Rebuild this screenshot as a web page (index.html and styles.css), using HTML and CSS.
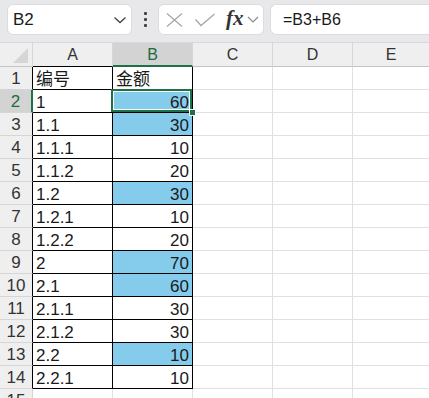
FILE: index.html
```html
<!DOCTYPE html>
<html lang="zh">
<head>
  <meta charset="UTF-8">
  <title>Sheet</title>
  <link rel="stylesheet" href="styles.css">
</head>
<body>
  <div class="toolbar">
    <div class="namebox">
      <span>B2</span>
      <svg width="14" height="8" viewBox="0 0 14 8"><polyline points="1.5,1.5 7,6.5 12.5,1.5" fill="none" stroke="#444" stroke-width="1.3"/></svg>
    </div>
    <div class="dots"><i></i><i></i><i></i></div>
    <div class="funcs">
      <svg class="ico" width="20" height="16" viewBox="0 0 20 16"><path d="M2 1.5 L17 14.5 M17 1.5 L2 14.5" stroke="#a6a6a6" stroke-width="1.3" fill="none"/></svg>
      <svg class="ico" width="22" height="14" viewBox="0 0 22 14"><polyline points="1.5,6.5 7,12.5 20.5,1" fill="none" stroke="#a6a6a6" stroke-width="1.3"/></svg>
      <span class="fx">fx</span>
      <svg width="12" height="7" viewBox="0 0 12 7"><polyline points="1,1 6,6 11,1" fill="none" stroke="#888" stroke-width="1.1"/></svg>
    </div>
    <div class="formula">=B3+B6</div>
  </div>

  <div class="sheet">
    <div class="corner"><svg width="32" height="23" viewBox="0 0 32 23"><polygon points="28,5 28,20 13,20" fill="#d6d6d6"/></svg></div>
    <div class="ch black">A</div><div class="ch sel-ch">B</div><div class="ch">C</div><div class="ch">D</div><div class="ch">E</div>

    <div class="rh">1</div><div class="d">编号</div><div class="d">金额</div><div class="c"></div><div class="c"></div><div class="c"></div>
    <div class="rh sel-rh">2</div><div class="d">1</div><div class="d n fill active">60</div><div class="c"></div><div class="c"></div><div class="c"></div>
    <div class="rh">3</div><div class="d">1.1</div><div class="d n fill">30</div><div class="c"></div><div class="c"></div><div class="c"></div>
    <div class="rh">4</div><div class="d">1.1.1</div><div class="d n">10</div><div class="c"></div><div class="c"></div><div class="c"></div>
    <div class="rh">5</div><div class="d">1.1.2</div><div class="d n">20</div><div class="c"></div><div class="c"></div><div class="c"></div>
    <div class="rh">6</div><div class="d">1.2</div><div class="d n fill">30</div><div class="c"></div><div class="c"></div><div class="c"></div>
    <div class="rh">7</div><div class="d">1.2.1</div><div class="d n">10</div><div class="c"></div><div class="c"></div><div class="c"></div>
    <div class="rh">8</div><div class="d">1.2.2</div><div class="d n">20</div><div class="c"></div><div class="c"></div><div class="c"></div>
    <div class="rh">9</div><div class="d">2</div><div class="d n fill">70</div><div class="c"></div><div class="c"></div><div class="c"></div>
    <div class="rh">10</div><div class="d">2.1</div><div class="d n fill">60</div><div class="c"></div><div class="c"></div><div class="c"></div>
    <div class="rh">11</div><div class="d">2.1.1</div><div class="d n">30</div><div class="c"></div><div class="c"></div><div class="c"></div>
    <div class="rh">12</div><div class="d">2.1.2</div><div class="d n">30</div><div class="c"></div><div class="c"></div><div class="c"></div>
    <div class="rh">13</div><div class="d">2.2</div><div class="d n fill">10</div><div class="c"></div><div class="c"></div><div class="c"></div>
    <div class="rh">14</div><div class="d">2.2.1</div><div class="d n">10</div><div class="c"></div><div class="c"></div><div class="c"></div>
    <div class="rh last">15</div><div class="c"></div><div class="c"></div><div class="c"></div><div class="c"></div><div class="c"></div>
  </div>
</body>
</html>
```

FILE: styles.css
```css
body {
  margin: 0;
  width: 429px;
  height: 398px;
  overflow: hidden;
  background: #fff;
  font-family: "Liberation Sans", "Noto Sans CJK SC", sans-serif;
  color: #1a1a1a;
}

/* formula bar */
.toolbar {
  height: 43px;
  box-sizing: border-box;
  background: #e8e8eb;
  border-bottom: 1px solid #d8d8db;
  display: flex;
  align-items: flex-start;
  padding: 4px 0 0 7px;
  white-space: nowrap;
}

.toolbar > * {
  flex-shrink: 0;
}

.namebox {
  width: 125px;
  height: 31px;
  box-sizing: border-box;
  background: #fff;
  border: 1px solid #dcdce0;
  border-radius: 6px;
  display: flex;
  align-items: center;
  justify-content: space-between;
  padding: 0 4px 0 5px;
  font-size: 17px;
}

.dots {
  width: 26px;
  height: 31px;
  display: flex;
  flex-direction: column;
  align-items: center;
  justify-content: center;
  gap: 3px;
}

.dots i {
  width: 3px;
  height: 3px;
  border-radius: 1px;
  background: #444;
}

.funcs {
  width: 106px;
  height: 31px;
  box-sizing: border-box;
  background: #fff;
  border: 1px solid #dcdce0;
  border-radius: 6px;
  display: flex;
  align-items: center;
  padding: 0 2px 0 6px;
  gap: 9px;
}

.fx {
  font-family: "Liberation Serif", serif;
  font-style: italic;
  font-weight: bold;
  font-size: 21px;
  color: #333;
  margin-left: 1px;
  margin-right: -6px;
  line-height: 1;
  padding-bottom: 2px;
}

.toolbar > .formula {
  flex: 1;
  margin-left: 6px;
  height: 31px;
  box-sizing: border-box;
  background: #fff;
  border: 1px solid #dcdce0;
  border-right: none;
  border-radius: 6px 0 0 6px;
  padding-left: 12px;
  line-height: 29px;
  font-size: 16px;
}

/* grid */
.sheet {
  display: grid;
  width: 429px;
  grid-template-columns: 33px repeat(4, 80px) 1fr;
  grid-template-rows: 24px;
  grid-auto-rows: 23px;
}

.sheet > div {
  box-sizing: border-box;
  border-right: 1px solid #e0e0e0;
  border-bottom: 1px solid #e0e0e0;
  position: relative;
}

.sheet > div:nth-child(6n) {
  border-right: none;
}

.corner,
.ch,
.rh {
  background: #efefef;
  color: #333;
}

.sheet > .corner {
  border-bottom-color: #c4c4c4;
  border-right-color: #d6d6d6;
}

.sheet > .ch {
  border-right-color: #d6d6d6;
  border-bottom-color: #c4c4c4;
  text-align: center;
  font-size: 16px;
  line-height: 23px;
}

.sheet > .ch:last-of-type {
  padding-left: 4px;
}

.sheet > .ch.black {
  border-bottom-color: #000;
}

.sheet > .sel-ch {
  background: #d3d3d3;
  color: #1d6b40;
  border-bottom: 2px solid #1e7145;
}

.sheet > .rh {
  border-right-color: #000;
  border-bottom-color: #d6d6d6;
  text-align: center;
  font-size: 17px;
  line-height: 24px;
}

.sheet > .rh.last {
  border-right-color: #d6d6d6;
}

.sheet > .sel-rh {
  background: #d3d3d3;
  color: #1d6b40;
  border-right: 2px solid #1e7145;
}

.sheet > .d {
  border-right-color: #000;
  border-bottom-color: #000;
  font-size: 17px;
  line-height: 19px;
  padding: 3px 3px 0;
}

.n {
  text-align: right;
}

.sheet > .fill {
  background: #84cbec;
}

.active::after {
  content: "";
  position: absolute;
  top: -1px;
  left: -2px;
  right: 0;
  bottom: 0;
  border: 2px solid #1e7145;
  box-shadow: inset 0 0 0 1px #fff;
}

.active::before {
  content: "";
  position: absolute;
  right: -4px;
  bottom: -4px;
  width: 5px;
  height: 5px;
  background: #1e7145;
  border: 1px solid #fff;
  z-index: 2;
}
```
